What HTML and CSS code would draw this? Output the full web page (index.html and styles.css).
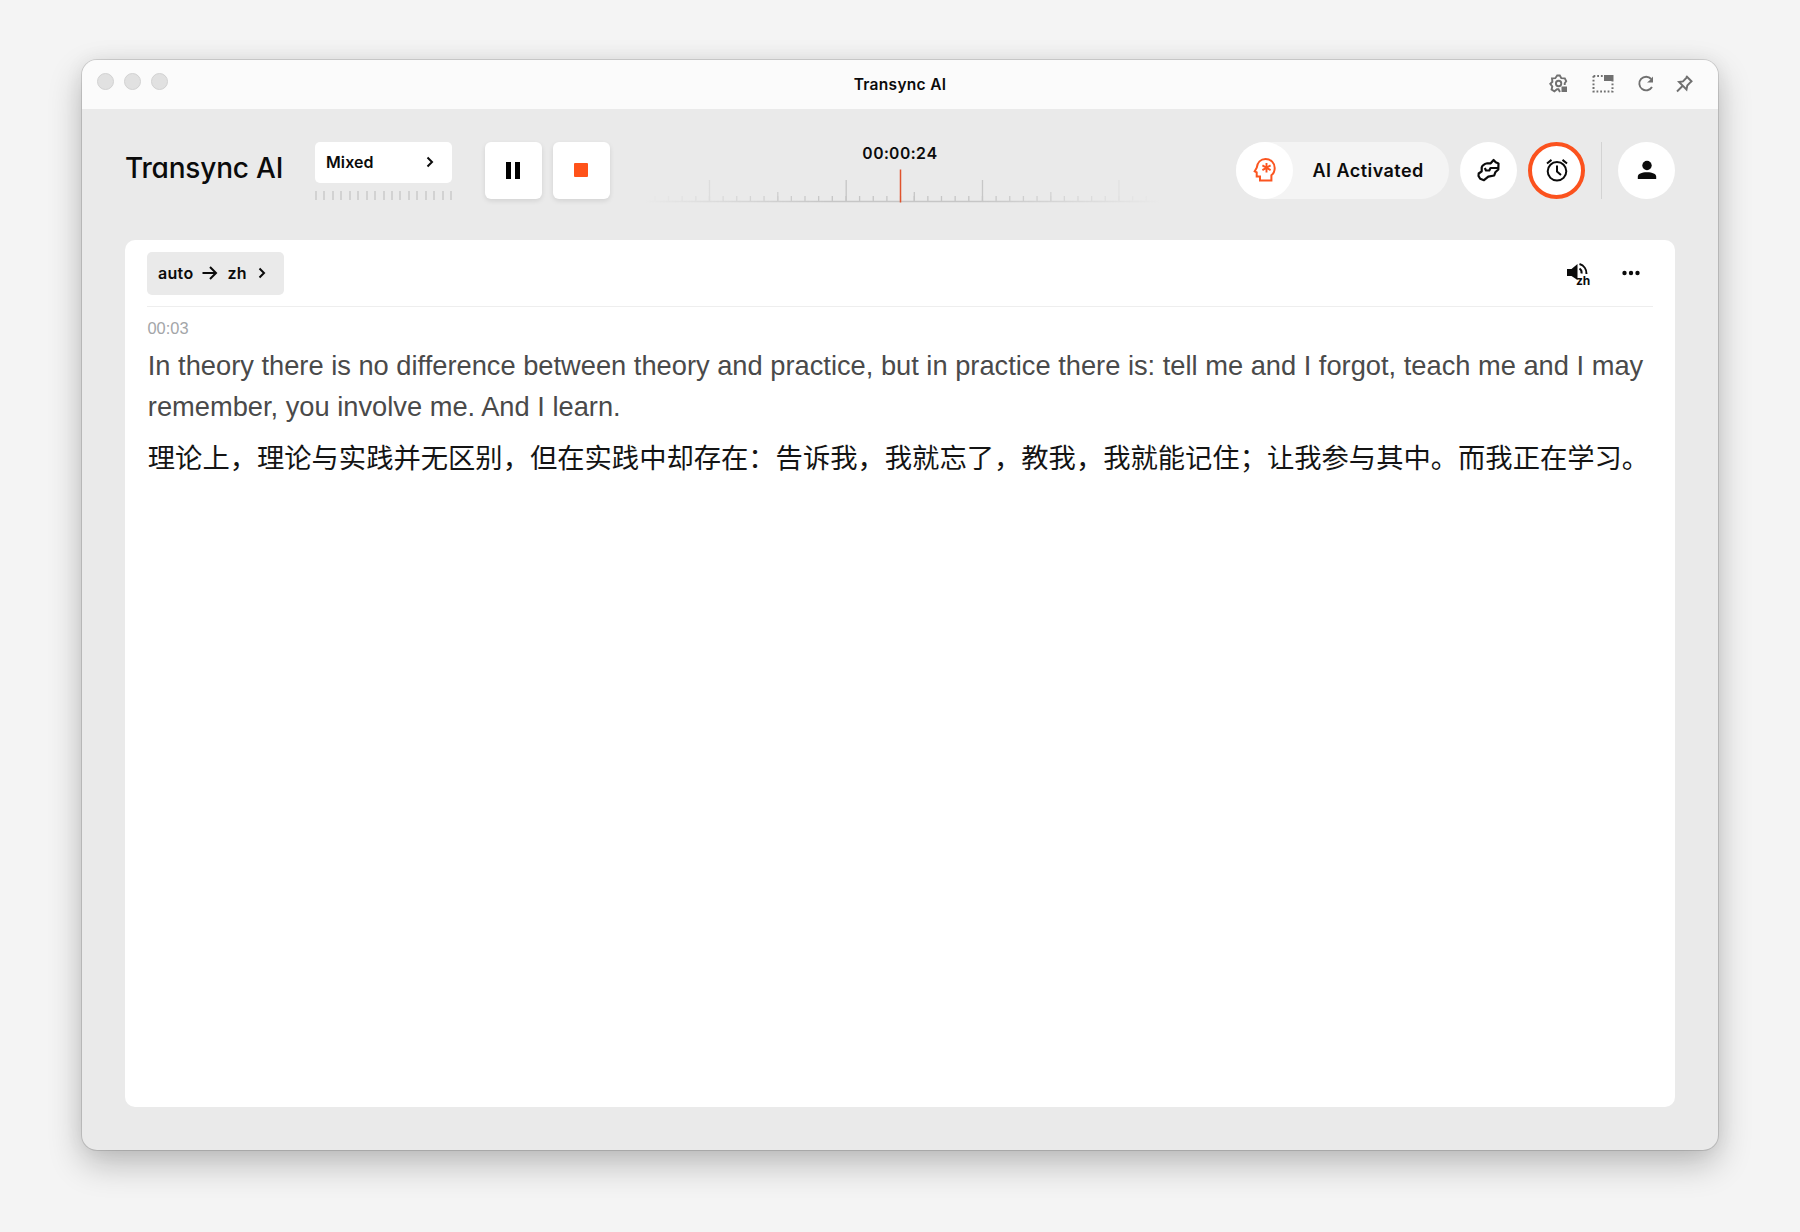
FILE: index.html
```html
<!DOCTYPE html>
<html lang="en">
<head>
<meta charset="utf-8">
<title>Transync AI</title>
<link rel="stylesheet" href="styles.css">
</head>
<body>
<div class="window">
  <header class="titlebar">
    <div class="lights"><i></i><i></i><i></i></div>
    <div class="title">Transync AI</div>
    <div class="tools">
      <svg width="20" height="20" viewBox="0 0 20 20"><path d="M11 18l-1.500-2.700H8L5.400 17.300 2.600 15.600 3.300 12.400 1.300 9.800 3.400 7.800 3 4.400l3.300-.2L8.200 1.500h2.600l1.500 2.700 3.500.2 1.400 2.800-1.500 2v1.800"/><circle cx="9.600" cy="9.500" r="2.700"/><path class="fill" d="M12.500 12.500h5.500V18h-5.500z"/></svg>
      <svg width="22" height="20" viewBox="0 0 22 20"><path stroke-width="2" stroke-dasharray="1.800 1.900" d="M1.500 2v15.500h19V7M1.500 2h10"/><path class="fill" d="M12 1h9.500v6H12z"/></svg>
      <svg width="18" height="20" viewBox="0 0 18 20"><path d="M14.200 5A6.800 6.800 0 1 0 15 13"/><path class="fill" d="M16 2.500v6h-6l2.500-2z"/></svg>
      <svg class="pin" width="20" height="20" viewBox="0 0 20 20"><path d="M11.200 2l6 6M12.200 3L8 7.400 4 8l7.500 7.500.8-4 4.200-4.300M7.500 12L2 17.500"/></svg>
    </div>
  </header>
  <div class="bar">
    <div class="logo">Transync AI</div>
    <div class="source">
      <div class="select"><span>Mixed</span><svg width="8" height="12" viewBox="0 0 8 12"><path d="M1.500 1.500L6 6l-4.500 4.500"/></svg></div>
      <div class="level"></div>
    </div>
    <div class="controls">
      <div class="btn pause"><i></i><i></i></div>
      <div class="btn"><i class="stop"></i></div>
    </div>
    <div class="timeline">
      <div class="time">00:00:24</div>
      <svg width="520" height="36" viewBox="640 167 520 36">
        <defs>
          <linearGradient id="fade" gradientUnits="userSpaceOnUse" x1="645" x2="1160" y1="0" y2="0"><stop offset="0" stop-color="#fff" stop-opacity="0"/><stop offset=".35" stop-color="#fff"/><stop offset=".65" stop-color="#fff"/><stop offset="1" stop-color="#fff" stop-opacity="0"/></linearGradient>
          <mask id="m" maskUnits="userSpaceOnUse" x="640" y="160" width="520" height="50"><rect x="640" y="160" width="520" height="50" fill="url(#fade)" stroke="none"/></mask>
        </defs>
        <g mask="url(#m)">
          <path class="minor" stroke-dasharray="1.300 12.350" d="M654.200 197.500H1160"/>
          <path class="tick" d="M640 200.500h520M709.500 179v21M846.200 179v21M982.500 179v21M1119 179v21M777.800 191v9M914.300 191v9M1050.800 191v9"/>
        </g>
        <path class="needle" d="M900.500 168.500v33"/>
      </svg>
    </div>
    <div class="actions">
      <div class="ai"><div class="round"><svg width="24" height="26" viewBox="0 0 24 26"><path d="M7 23.500v-4H3.700v-4.200L1.700 14.300 3.700 10.800C4.300 5.400 7.800 2 12.500 2 18 2 21.700 6 21.700 11c0 3.500-1.400 5.800-3.300 7.300v5.200H6"/><path d="M13.500 6v9.500M9.400 8.400l8.200 4.700M17.600 8.400l-8.200 4.700" stroke-width="1.900"/></svg></div><span>AI Activated</span></div>
      <div class="round"><svg width="24" height="24" viewBox="0 0 24 24"><path class="soft" d="M1.700 15.500L4.700 13.300V9.500Q5.500 6.500 10.300 5.300H13.700L16.600 2 18.700 4.300 21.500 5.500 21.300 11.500 18.300 14.300 17.200 17.500 11.300 18.700 7 22.200 3.200 20.800 1.500 18zM21.200 10H13.500L12.300 12.500H9L7.800 10"/></svg></div>
      <div class="round alarm"><svg width="24" height="24" viewBox="0 0 24 24"><circle cx="12" cy="13.300" r="9.300"/><path d="M12 7.500v6l4 3.500M2 5.500l4.500-3.600M22 5.500l-4.500-3.600"/></svg></div>
      <div class="divider"></div>
      <div class="round"><svg width="20" height="20" viewBox="0 0 20 20"><g class="solid"><circle cx="10" cy="5.500" r="4.700"/><path d="M.8 19v-2.200c0-3 3.700-4.600 9.200-4.600s9.200 1.600 9.200 4.600V19z"/></g></svg></div>
    </div>
  </div>
  <main class="panel">
    <div class="panelhead">
      <div class="chip"><span>auto</span><svg width="16" height="14" viewBox="0 0 16 14"><path d="M.5 7H14M8 1l6 6-6 6"/></svg><span>zh</span><svg class="chev" width="8" height="12" viewBox="0 0 8 12"><path d="M1.500 1.500L6 6l-4.500 4.500"/></svg></div>
      <div class="right">
        <svg width="26" height="26" viewBox="0 0 26 26"><g class="solid"><path d="M1 9h4.500L11.500 4v16L5.500 16H1z"/></g><path d="M13.500 4A10 10 0 0 1 20.500 14M13.500 8.500a5 5 0 0 1 2 5"/><text x="10" y="24.500">zh</text></svg>
        <svg width="18" height="6" viewBox="0 0 18 6"><g class="solid"><circle cx="2.500" cy="3" r="2.200"/><circle cx="9" cy="3" r="2.200"/><circle cx="15.500" cy="3" r="2.200"/></g></svg>
      </div>
    </div>
    <div class="stamp">00:03</div>
    <p class="orig">In theory there is no difference between theory and practice, but in practice there is: tell me and I forgot, teach me and I may<br>remember, you involve me. And I learn.</p>
    <p class="trans" lang="zh">理论上，理论与实践并无区别，但在实践中却存在：告诉我，我就忘了，教我，我就能记住；让我参与其中。而我正在学习。</p>
  </main>
</div>
</body>
</html>
```
FILE: styles.css
```css
* { box-sizing: border-box; }
body { margin: 0; height: 1232px; padding: 60px 82px 82px; background: #f4f4f4; font-family: Inter, "Liberation Sans", sans-serif; color: #0b0b0b; overflow: hidden; }
svg { display: block; fill: none; stroke: currentColor; stroke-width: 2; flex: none; }
.solid { fill: currentColor; stroke: none; }
.soft { stroke-linejoin: round; stroke-width: 2.2; }
.window { height: 1090px; border-radius: 15px; background: #eaeaea; display: flex; flex-direction: column; box-shadow: 0 0 0 1px rgba(0,0,0,.12), 0 14px 34px rgba(0,0,0,.24), 0 0 20px rgba(0,0,0,.06); }
.titlebar { height: 49px; flex: none; background: #fbfbfb; border-radius: 15px 15px 0 0; display: grid; grid-template-columns: 1fr auto 1fr; align-items: center; padding: 0 23px 0 15px; }
.lights { display: flex; gap: 10px; margin-top: -6px; }
.lights i { width: 17px; height: 17px; border-radius: 50%; background: #e1e1e1; border: 1px solid #d2d2d2; }
.title { font-weight: 600; font-size: 15.5px; letter-spacing: .3px; padding-left: 8px; }
.tools { display: flex; justify-content: flex-end; align-items: center; gap: 23px; color: #707070; }
.tools svg { stroke-width: 1.9; margin-top: -1px; }
.tools .pin { margin-left: -3px; }
.tools .fill { fill: currentColor; stroke: none; }
.bar { display: flex; align-items: flex-start; padding: 32.500px 43px 0; height: 131px; flex: none; }
.logo { width: 190px; font-size: 28px; line-height: 52px; font-weight: 500; letter-spacing: -.2px; font-feature-settings: "cv11"; white-space: nowrap; }
.source { width: 137px; }
.select { height: 41px; background: #fff; border-radius: 5px; display: flex; align-items: center; justify-content: space-between; padding: 0 18px 0 11px; font-size: 16px; font-weight: 600; letter-spacing: .1px; }
.level { height: 9px; margin-top: 8px; background: repeating-linear-gradient(90deg, #d2d2d2 0 2px, transparent 2px 8.440px); }
.controls { display: flex; gap: 11px; margin-left: 32.500px; }
.btn { width: 57px; height: 57px; border-radius: 6px; background: #fff; display: flex; align-items: center; justify-content: center; gap: 4px; box-shadow: 0 2px 5px rgba(0,0,0,.1); }
.pause i { width: 5px; height: 17px; background: #000; }
.stop { width: 14px; height: 14px; background: #ff5219; border-radius: 1px; }
.timeline { width: 520px; margin-left: 30.500px; display: flex; flex-direction: column; align-items: center; }
.time { font-size: 16px; line-height: 20px; height: 26px; padding-top: 1px; font-weight: 600; letter-spacing: .6px; font-variant-numeric: tabular-nums; }
.tick { stroke: #c6c6c6; stroke-width: 1.300; }
.minor { stroke: #c6c6c6; stroke-width: 5; }
.needle { stroke: #e0532c; stroke-width: 1.500; }
.actions { margin-left: auto; display: flex; gap: 11px; }
.ai { width: 213px; height: 57px; border-radius: 29px; background: #f4f4f4; display: flex; align-items: center; font-size: 18px; font-weight: 600; letter-spacing: .45px; gap: 19.500px; white-space: nowrap; }
.ai .round { color: #fb5520; }
.round { width: 57px; height: 57px; flex: none; border-radius: 50%; background: #fff; display: flex; align-items: center; justify-content: center; }
.alarm { border: 4px solid #fb521e; }
.divider { width: 1px; height: 57px; background: #d3d3d3; margin: 0 5px; }
.panel { margin: 0 43px; height: 867px; background: #fff; border-radius: 10px; padding: 0 22px; }
.panelhead { height: 67px; border-bottom: 1.500px solid #eeeeee; padding: 11px 13px 11px 0; display: flex; justify-content: space-between; align-items: center; }
.chip { width: 137px; height: 43px; border-radius: 5px; background: #eaeaea; display: flex; align-items: center; padding-left: 11px; gap: 9px; font-size: 16px; font-weight: 600; letter-spacing: .3px; }
.chip .chev { margin-left: 2px; }
.right { display: flex; align-items: center; gap: 30px; }
.right text { font: 700 12px Inter, sans-serif; fill: currentColor; stroke: none; }
.stamp { font: 16.400px/24px "Liberation Sans", Arial, sans-serif; color: #a3a5a8; margin: 9px 0 0 .5px; }
.orig { font: 27.280px/41px "Liberation Sans", Arial, sans-serif; color: #4a4a4a; margin: 5px 0 0 .8px; white-space: nowrap; }
.trans { font: 27.300px/41px "Liberation Sans", "Noto Sans CJK SC", sans-serif; color: #141414; margin: 11px 0 0 .8px; white-space: nowrap; }
```
